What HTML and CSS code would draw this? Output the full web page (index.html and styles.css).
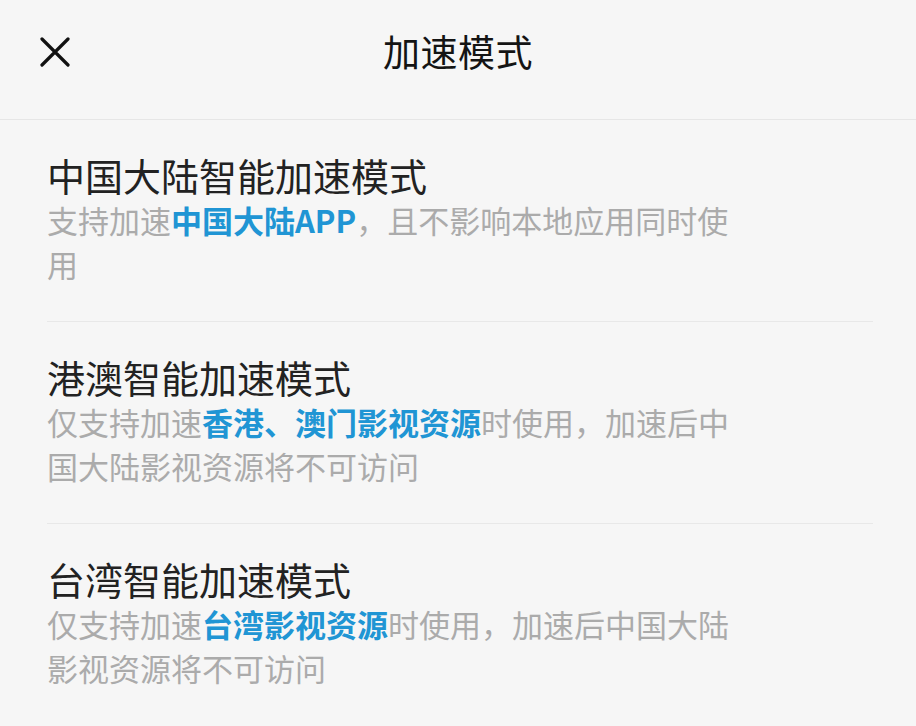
FILE: index.html
```html
<!DOCTYPE html>
<html lang="zh-CN">
<head>
<meta charset="utf-8">
<title>加速模式</title>
<link rel="stylesheet" href="styles.css">
</head>
<body>
<header class="topbar">
  <div class="close">
    <svg width="30" height="30" viewBox="0 0 30 30"><path d="M2 2 L28 28 M28 2 L2 28" stroke="#111" stroke-width="3.2" stroke-linecap="round" fill="none"/></svg>
  </div>
  <h1 class="title">加速模式</h1>
  <div></div>
</header>
<main>
  <section class="mode">
    <h2 class="mode-title">中国大陆智能加速模式</h2>
    <p class="mode-desc">支持加速<b class="hl">中国大陆APP</b>，且不影响本地应用同时使用</p>
  </section>
  <section class="mode">
    <h2 class="mode-title">港澳智能加速模式</h2>
    <p class="mode-desc">仅支持加速<b class="hl">香港、澳门影视资源</b>时使用，加速后中国大陆影视资源将不可访问</p>
  </section>
  <section class="mode">
    <h2 class="mode-title">台湾智能加速模式</h2>
    <p class="mode-desc">仅支持加速<b class="hl">台湾影视资源</b>时使用，加速后中国大陆影视资源将不可访问</p>
  </section>
</main>
</body>
</html>
```
FILE: styles.css
```css
html, body {
  margin: 0;
  padding: 0;
  background: #f6f6f6;
}
body {
  font-family: "Noto Sans CJK SC", "Noto Sans", sans-serif;
  width: 916px;
  height: 726px;
  overflow: hidden;
}
.topbar {
  display: grid;
  grid-template-columns: 1fr auto 1fr;
  align-items: start;
  height: 92px;
  padding-top: 28px;
  border-bottom: 1px solid #e6e6e6;
  box-sizing: content-box;
  height: 91px;
}
.close {
  padding-left: 40px;
  margin-top: 9px;
  height: 30px;
}
.close svg { display: block; }
.title {
  margin: 0;
  font-size: 37px;
  line-height: 46px;
  font-weight: 400;
  color: #141414;
  letter-spacing: 0.5px;
}
.mode {
  margin: 0 43px 0 47px;
  padding: 32px 0 35px;
}
.mode + .mode {
  border-top: 1px solid #e8e8e8;
}
.mode-title {
  margin: 0;
  font-size: 38px;
  line-height: 46px;
  font-weight: 400;
  color: #222;
}
.mode-desc {
  margin: 0;
  max-width: 690px;
  font-size: 31px;
  line-height: 44px;
  color: #ababab;
}
.hl {
  color: #2095d4;
  font-weight: 700;
}
```
